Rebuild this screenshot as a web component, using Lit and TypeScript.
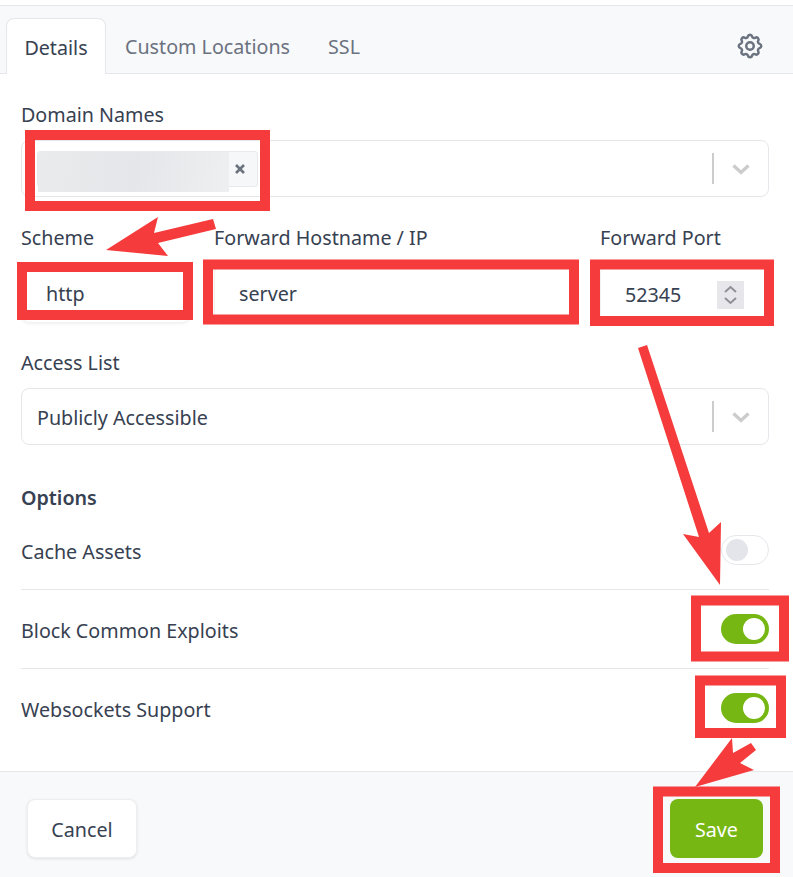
import {LitElement, html, css, svg} from 'lit';
import {customElement} from 'lit/decorators.js';

const chevron = html`<svg class="chev" viewBox="0 0 20 20"><path d="M2.5 6.5 10 13.5l7.5-7" fill="none" stroke="#ccc" stroke-width="3.4"/></svg>`;

// annotation frames drawn on top of the form: x, y, w, h of the stroke centre line
const frames = [
  [30, 135, 235, 71],
  [22, 267, 166, 48],
  [208, 264.5, 366, 55],
  [595, 264.5, 174, 56.5],
  [696, 600.5, 88, 56],
  [700, 680.5, 81, 52.5],
  [658, 791.5, 117, 76.5],
];

const arrows = [
  '106,250 158,217 154,233 213,219 216,229 158,243 168,256',
  '638,348 647,345 709,533 721,522 720,585 683,534 699,537',
  '695,787 732,738 733,753 751,743 756,750 740,763 754,770',
];

@customElement('app-root')
export class AppRoot extends LitElement {
  static styles = css`
    :host {
      display: block;
      position: relative;
      width: 793px;
      height: 877px;
      overflow: hidden;
      background: #fff;
      font-family: "Noto Sans", "Open Sans", sans-serif;
      font-size: 19.7px;
      line-height: 26px;
      color: #374151;
    }
    .page {
      display: flex;
      flex-direction: column;
      height: 100%;
      padding-top: 5px;
      box-sizing: border-box;
    }
    .tabs {
      display: flex;
      align-items: flex-end;
      height: 69px;
      box-sizing: border-box;
      padding: 0 28px 0 6px;
      background: #f8f9fb;
      border-top: 1px solid #e5e7eb;
      border-bottom: 1px solid #e5e7eb;
    }
    .tab {
      height: 55px;
      box-sizing: border-box;
      padding: 2px 18px 0;
      display: flex;
      align-items: center;
      color: #6b7280;
      border: 1px solid transparent;
      border-bottom: none;
    }
    .tab.active {
      width: 100px;
      margin-bottom: -1px;
      height: 56px;
      justify-content: center;
      padding: 2px 0 0;
      background: #fff;
      color: #374151;
      border-color: #e5e7eb;
      border-radius: 8px 8px 0 0;
    }
    .gear {
      margin-left: auto;
      align-self: center;
      width: 30px;
      height: 30px;
      color: #6b7280;
      margin-top: 12px;
    }
    .form {
      flex: 1;
      padding: 28px 24px 0 21px;
    }
    .label {
      display: block;
      margin-bottom: 12px;
    }
    .select {
      display: flex;
      align-items: center;
      height: 57px;
      box-sizing: border-box;
      padding: 0 17px 0 15px;
      border: 1px solid #e5e7eb;
      border-radius: 8px;
    }
    .chip {
      display: flex;
      align-items: center;
      justify-content: flex-end;
      width: 221px;
      height: 36px;
      box-sizing: border-box;
      border: 1px solid #e8e9ec;
      border-radius: 3px;
      background: #f6f7f9;
      padding-right: 11px;
      position: relative;
    }
    .chip .x {
      width: 12px;
      height: 12px;
    }
    .blur {
      position: absolute;
      left: 0;
      top: 0;
      width: 191px;
      height: 40px;
      background: linear-gradient(100deg, #eaebed, #e5e6e9 50%, #eeeff1);
    }
    .sep {
      width: 2px;
      height: 31px;
      margin-left: auto;
      background: #ccc;
    }
    .chev {
      width: 20px;
      height: 20px;
      margin-left: 17px;
    }
    .row {
      display: grid;
      grid-template-columns: 169px 362px 169px;
      column-gap: 24px;
      margin: 28px 0 0;
    }
    .row .label {
      margin-bottom: 15px;
    }
    .input {
      height: 57px;
      box-sizing: border-box;
      display: flex;
      align-items: center;
      padding: 0 0 2px 24px;
      border: 1px solid #f1f2f4;
      border-radius: 8px;
      box-shadow: 0 1px 3px rgba(0, 0, 0, 0.06);
    }
    .input.port {
      padding-bottom: 0;
    }
    .spin {
      width: 27px;
      height: 28px;
      margin-left: auto;
      margin-right: 24px;
      background: #e6e6eb;
    }
    .access {
      margin-top: 27px;
    }
    .value {
      padding-top: 2px;
    }
    .options {
      margin-top: 40px;
      font-weight: 600;
    }
    .opt {
      display: flex;
      align-items: center;
      justify-content: space-between;
      height: 79px;
      box-sizing: border-box;
      border-bottom: 1px solid #e5e7eb;
    }
    .opt:first-of-type {
      height: 78px;
    }
    .opt:last-child {
      height: 78px;
      border-bottom: none;
    }
    .opt span {
      padding-top: 4px;
    }
    .toggle {
      display: flex;
      align-items: center;
      width: 48px;
      height: 30px;
      box-sizing: border-box;
      padding: 0 4px;
      border-radius: 15px;
      background: #76b714;
      justify-content: flex-end;
    }
    .toggle.off {
      background: #fff;
      border: 1px solid #e5e7eb;
      justify-content: flex-start;
    }
    .knob {
      width: 22px;
      height: 22px;
      border-radius: 50%;
      background: #fff;
    }
    .off .knob {
      background: #e4e5ea;
    }
    .footer {
      display: flex;
      justify-content: space-between;
      align-items: center;
      height: 106px;
      box-sizing: border-box;
      padding: 8px 30px 0 27px;
      background: #f8f9fb;
      border-top: 1px solid #e5e7eb;
    }
    .btn {
      height: 59px;
      box-sizing: border-box;
      padding-top: 2px;
      display: flex;
      align-items: center;
      justify-content: center;
      border-radius: 8px;
    }
    .cancel {
      width: 110px;
      background: #fff;
      border: 1px solid #eceef1;
      box-shadow: 0 1px 3px rgba(0, 0, 0, 0.1);
    }
    .save {
      width: 93px;
      background: #76b714;
      color: #fff;
    }
    .marks {
      position: absolute;
      left: 0;
      top: 0;
      width: 793px;
      height: 877px;
      pointer-events: none;
    }
  `;

  render() {
    return html`
      <div class="page">
        <div class="tabs">
          <div class="tab active">Details</div>
          <div class="tab">Custom Locations</div>
          <div class="tab">SSL</div>
          <svg class="gear" viewBox="0 0 24 24" fill="none" stroke="currentColor" stroke-width="2" stroke-linecap="round" stroke-linejoin="round">
            <path d="M10.325 4.317c.426-1.756 2.924-1.756 3.35 0a1.724 1.724 0 002.573 1.066c1.543-.94 3.31.826 2.37 2.37a1.724 1.724 0 001.065 2.572c1.756.426 1.756 2.924 0 3.35a1.724 1.724 0 00-1.066 2.573c.94 1.543-.826 3.31-2.37 2.37a1.724 1.724 0 00-2.572 1.065c-.426 1.756-2.924 1.756-3.35 0a1.724 1.724 0 00-2.573-1.066c-1.543.94-3.31-.826-2.37-2.37a1.724 1.724 0 00-1.065-2.572c-1.756-.426-1.756-2.924 0-3.35a1.724 1.724 0 001.066-2.573c-.94-1.543.826-3.31 2.37-2.37.996.608 2.296.07 2.572-1.065z"/>
            <path d="M15 12a3 3 0 11-6 0 3 3 0 016 0z"/>
          </svg>
        </div>
        <div class="form">
          <span class="label">Domain Names</span>
          <div class="select">
            <div class="chip">
              <div class="blur"></div>
              <svg class="x" viewBox="0 0 12 12"><path d="M2 2l8 8M10 2l-8 8" stroke="#6b7280" stroke-width="2.6"/></svg>
            </div>
            <div class="sep"></div>
            ${chevron}
          </div>
          <div class="row">
            <div><span class="label">Scheme</span><div class="input">http</div></div>
            <div><span class="label">Forward Hostname / IP</span><div class="input">server</div></div>
            <div>
              <span class="label">Forward Port</span>
              <div class="input port">
                52345
                <svg class="spin" viewBox="0 0 27 28"><path d="M8 11l5.5-5 5.5 5M8 17l5.5 5 5.5-5" fill="none" stroke="#8f8f96" stroke-width="2"/></svg>
              </div>
            </div>
          </div>
          <div class="access">
            <span class="label">Access List</span>
            <div class="select"><span class="value">Publicly Accessible</span><div class="sep"></div>${chevron}</div>
          </div>
          <div class="options">Options</div>
          <div class="opt"><span>Cache Assets</span><div class="toggle off"><div class="knob"></div></div></div>
          <div class="opt"><span>Block Common Exploits</span><div class="toggle"><div class="knob"></div></div></div>
          <div class="opt"><span>Websockets Support</span><div class="toggle"><div class="knob"></div></div></div>
        </div>
        <div class="footer">
          <div class="btn cancel">Cancel</div>
          <div class="btn save">Save</div>
        </div>
      </div>
      <svg class="marks" viewBox="0 0 793 877">
        ${frames.map(([x, y, w, h]) => svg`<rect x=${x} y=${y} width=${w} height=${h} fill="none" stroke="#f53b3b" stroke-width="10"/>`)}
        ${arrows.map((p) => svg`<polygon points=${p} fill="#f53b3b"/>`)}
      </svg>
    `;
  }
}
